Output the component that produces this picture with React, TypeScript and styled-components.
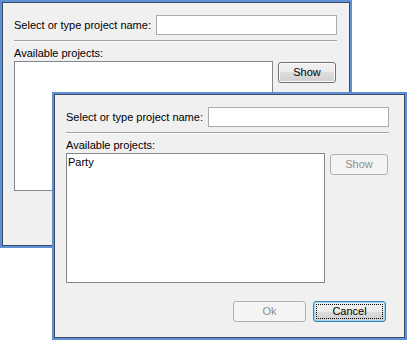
import React from "react";
import styled, { createGlobalStyle, css } from "styled-components";

const GlobalStyle = createGlobalStyle`
  html, body {
    margin: 0;
    padding: 0;
    background: #ffffff;
  }
  body {
    font-family: "Liberation Sans", Arial, sans-serif;
    font-size: 11px;
    color: #000;
  }
`;

const Desktop = styled.div`
  position: relative;
  width: 407px;
  height: 342px;
  overflow: hidden;
  background: #ffffff;
`;

const Window = styled.div<{ $x: number; $y: number; $w: number; $h: number }>`
  position: absolute;
  left: ${(p) => p.$x}px;
  top: ${(p) => p.$y}px;
  width: ${(p) => p.$w}px;
  height: ${(p) => p.$h}px;
  box-sizing: border-box;
  background: #f0f0f0;
  border: 2px solid #5f8fd4;
  box-shadow: inset 0 0 0 1px #3d4c66;
  padding: 13px 0 0 12px;
`;

const Content = styled.div`
  width: 323px;
  display: flex;
  flex-direction: column;
`;

const TopRow = styled.div`
  display: flex;
  align-items: center;
  justify-content: space-between;
  height: 20px;
`;

const Label = styled.span`
  line-height: 13px;
  white-space: nowrap;
`;

const TextInput = styled.div`
  width: 181px;
  height: 20px;
  box-sizing: border-box;
  background: #ffffff;
  border: 1px solid #ababab;
`;

const Separator = styled.div`
  margin-top: 5px;
  height: 1px;
  border-top: 1px solid #a0a0a0;
  border-bottom: 1px solid #ffffff;
  box-sizing: content-box;
  height: 0;
`;

const SectionLabel = styled.div`
  margin-top: 5px;
  margin-bottom: 1px;
  line-height: 13px;
`;

const MiddleRow = styled.div`
  display: flex;
  align-items: flex-start;
  gap: 5px;
`;

const ListBox = styled.div`
  width: 259px;
  height: 130px;
  box-sizing: border-box;
  background: #ffffff;
  border: 1px solid #828790;
  padding: 1px 0 0 0;
`;

const ListItem = styled.div`
  line-height: 13px;
  padding: 1px 1px;
`;

const Button = styled.div<{ $w: number; $disabled?: boolean; $default?: boolean }>`
  width: ${(p) => p.$w}px;
  height: 21px;
  box-sizing: border-box;
  border-radius: 3px;
  display: flex;
  align-items: center;
  justify-content: center;
  line-height: 13px;
  position: relative;
  ${(p) =>
    p.$disabled
      ? css`
          border: 1px solid #adb2b5;
          background: #f4f4f4;
          color: #8d8d8d;
        `
      : p.$default
      ? css`
          border: 1px solid #3c7fb1;
          background: linear-gradient(#eaf6fd 0%, #d9f0fc 50%, #bee6fd 50%, #a7d9f5 100%);
          background: linear-gradient(#f2f2f2 0%, #ebebeb 50%, #dddddd 50%, #cfcfcf 100%);
          box-shadow: inset 0 0 0 1px #9fd4f3;
          color: #000;
        `
      : css`
          border: 1px solid #707070;
          background: linear-gradient(#f2f2f2 0%, #ebebeb 50%, #dddddd 50%, #cfcfcf 100%);
          box-shadow: inset 0 0 0 1px #fcfcfc;
          color: #000;
        `}
`;

const FocusRing = styled.span`
  position: absolute;
  left: 2px;
  top: 2px;
  right: 2px;
  bottom: 2px;
  border: 1px dotted #000;
`;

const ShowSlot = styled.div`
  margin-top: 1px;
`;

const BottomRow = styled.div`
  margin-top: 18px;
  margin-right: 3px;
  display: flex;
  justify-content: flex-end;
  gap: 7px;
`;

type DialogProps = {
  x: number;
  y: number;
  w: number;
  items: string[];
  showEnabled: boolean;
  focused: boolean;
};

function ProjectDialog({ x, y, w, items, showEnabled, focused }: DialogProps) {
  return (
    <Window $x={x} $y={y} $w={w} $h={248}>
      <Content>
        <TopRow>
          <Label>Select or type project name:</Label>
          <TextInput />
        </TopRow>
        <Separator />
        <SectionLabel>Available projects:</SectionLabel>
        <MiddleRow>
          <ListBox>
            {items.map((it) => (
              <ListItem key={it}>{it}</ListItem>
            ))}
          </ListBox>
          <ShowSlot>
            <Button $w={58} $disabled={!showEnabled}>
              Show
            </Button>
          </ShowSlot>
        </MiddleRow>
        <BottomRow>
          <Button $w={73} $disabled>
            Ok
          </Button>
          <Button $w={73} $default={focused}>
            Cancel
            {focused && <FocusRing />}
          </Button>
        </BottomRow>
      </Content>
    </Window>
  );
}

export default function App() {
  return (
    <>
      <GlobalStyle />
      <Desktop>
        <ProjectDialog x={0} y={0} w={352} items={[]} showEnabled focused={false} />
        <ProjectDialog x={52} y={92} w={355} items={["Party"]} showEnabled={false} focused />
      </Desktop>
    </>
  );
}
